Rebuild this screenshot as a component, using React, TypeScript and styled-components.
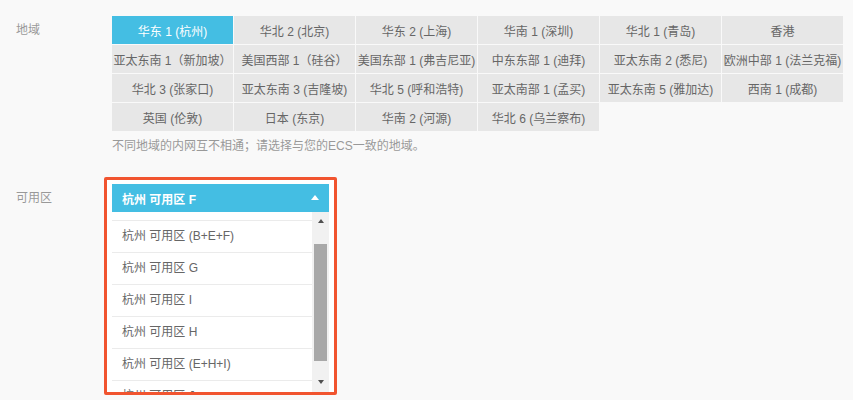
import React from 'react';
import styled, { createGlobalStyle } from 'styled-components';

const GlobalStyle = createGlobalStyle`
    body {
        margin: 0;
        background: #f9f9f9;
        font-family: 'Liberation Sans', 'Noto Sans CJK SC', sans-serif;
        font-size: 12px;
    }
`;

const Page = styled.div`
    padding: 16px;
`;

const FieldRow = styled.div<{ labelWidth: number }>`
    display: grid;
    grid-template-columns: ${({ labelWidth }) => labelWidth}px auto;
    justify-content: start;
`;

const Label = styled.div<{ offset?: number }>`
    color: #999;
    line-height: 28px;
    padding-top: ${({ offset }) => offset || 0}px;
`;

const RegionGrid = styled.div`
    display: grid;
    grid-template-columns: repeat(6, 121px);
    grid-auto-rows: 28px;
    gap: 1px;
`;

const RegionCell = styled.div<{ active?: boolean }>`
    display: flex;
    align-items: center;
    justify-content: center;
    white-space: nowrap;
    background: ${({ active }) => (active ? '#44bee3' : '#e7e7e7')};
    color: ${({ active }) => (active ? '#fff' : '#666')};
`;

const Note = styled.div`
    margin-top: 5px;
    line-height: 20px;
    color: #999;
`;

const ZoneSection = styled.div`
    margin-top: 21px;
`;

/* red annotation frame around the open select */
const Highlight = styled.div`
    border: 3px solid #f1542f;
    border-radius: 2px;
    background: #fff;
    padding: 4px 5px 0;
`;

const SelectHead = styled.div`
    width: 217px;
    height: 28px;
    box-sizing: border-box;
    padding: 0 10px;
    display: flex;
    align-items: center;
    justify-content: space-between;
    background: #44bee3;
    color: #fff;
    font-weight: bold;
`;

const Caret = styled.span`
    width: 0;
    height: 0;
    border-left: 4px solid transparent;
    border-right: 4px solid transparent;
    border-bottom: 5px solid #fff;
    margin-bottom: 2px;
`;

const Dropdown = styled.div`
    display: flex;
    width: 217px;
    height: 180px;
`;

const Viewport = styled.div`
    flex: 1;
    overflow: hidden;
`;

const OptionList = styled.ul<{ scrolled: number }>`
    list-style: none;
    margin: -${({ scrolled }) => scrolled}px 0 0;
    padding: 0;
`;

const Option = styled.li`
    height: 31px;
    line-height: 31px;
    padding-left: 10px;
    border-bottom: 1px solid #ebebeb;
    color: #666;
    white-space: nowrap;
`;

const ScrollBar = styled.div`
    width: 17px;
    display: flex;
    flex-direction: column;
    background: #f1f1f1;
`;

const ScrollButton = styled.div<{ down?: boolean }>`
    height: 17px;
    display: flex;
    justify-content: center;
    align-items: ${({ down }) => (down ? 'flex-end' : 'flex-start')};
    padding: ${({ down }) => (down ? '0 0 8px' : '7px 0 0')};
    box-sizing: border-box;

    &::before {
        content: '';
        border-left: 3.5px solid transparent;
        border-right: 3.5px solid transparent;
        ${({ down }) => (down ? 'border-top' : 'border-bottom')}: 4px solid #505050;
    }
`;

const Track = styled.div`
    flex: 1;
    padding: 15px 2px 0;
`;

const Thumb = styled.div`
    height: 117px;
    background: #a8a8a8;
`;

const regions = [
    '华东 1 (杭州)',
    '华北 2 (北京)',
    '华东 2 (上海)',
    '华南 1 (深圳)',
    '华北 1 (青岛)',
    '香港',
    '亚太东南 1（新加坡）',
    '美国西部 1（硅谷）',
    '美国东部 1 (弗吉尼亚)',
    '中东东部 1 (迪拜)',
    '亚太东南 2 (悉尼)',
    '欧洲中部 1 (法兰克福)',
    '华北 3 (张家口)',
    '亚太东南 3 (吉隆坡)',
    '华北 5 (呼和浩特)',
    '亚太南部 1 (孟买)',
    '亚太东南 5 (雅加达)',
    '西南 1 (成都)',
    '英国 (伦敦)',
    '日本 (东京)',
    '华南 2 (河源)',
    '华北 6 (乌兰察布)',
];

const zones = [
    '杭州 可用区 E',
    '杭州 可用区 (B+E+F)',
    '杭州 可用区 G',
    '杭州 可用区 I',
    '杭州 可用区 H',
    '杭州 可用区 (E+H+I)',
    '杭州 可用区 J',
];

const App = () => {
    return (
        <>
            <GlobalStyle />
            <Page>
                <FieldRow labelWidth={96}>
                    <Label>地域</Label>
                    <div>
                        <RegionGrid>
                            {regions.map((name, i) => (
                                <RegionCell key={name} active={i === 0}>
                                    {name}
                                </RegionCell>
                            ))}
                        </RegionGrid>
                        <Note>不同地域的内网互不相通；请选择与您的ECS一致的地域。</Note>
                    </div>
                </FieldRow>
                <ZoneSection>
                    <FieldRow labelWidth={88}>
                        <Label offset={7}>可用区</Label>
                        <Highlight>
                            <SelectHead>
                                杭州 可用区 F
                                <Caret />
                            </SelectHead>
                            <Dropdown>
                                <Viewport>
                                    <OptionList scrolled={23}>
                                        {zones.map(z => (
                                            <Option key={z}>{z}</Option>
                                        ))}
                                    </OptionList>
                                </Viewport>
                                <ScrollBar>
                                    <ScrollButton />
                                    <Track>
                                        <Thumb />
                                    </Track>
                                    <ScrollButton down />
                                </ScrollBar>
                            </Dropdown>
                        </Highlight>
                    </FieldRow>
                </ZoneSection>
            </Page>
        </>
    );
};

export default App;
